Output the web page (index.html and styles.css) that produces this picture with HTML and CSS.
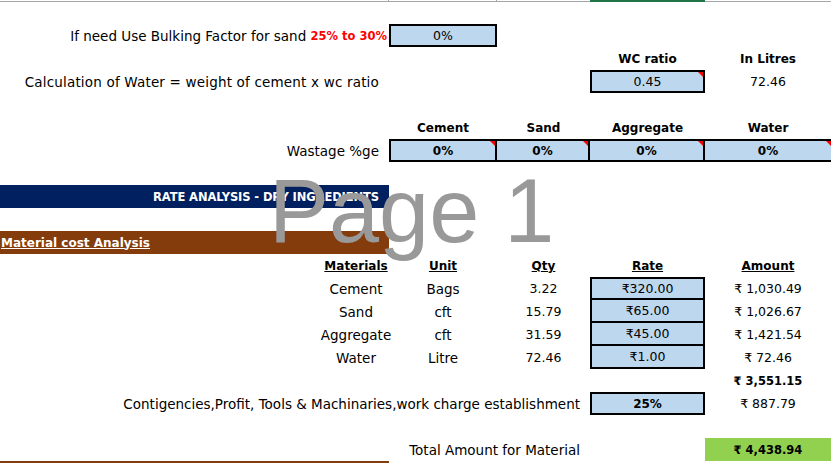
FILE: index.html
```html
<!DOCTYPE html>
<html lang="en">
<head>
<meta charset="utf-8">
<title>Rate Analysis</title>
<link rel="stylesheet" href="styles.css">
</head>
<body>
<div class="sheet">
  <div class="colbar"><span></span><span class="tick"></span><span class="tick"></span><span></span><span class="sel"></span><span></span></div>
  <div class="gap0"></div>

  <div class="row">
    <div class="cell a lbl tight">If need Use Bulking Factor for sand&nbsp;<span class="red">25% to 30%</span></div>
    <div class="cell c3 box n">0%</div>
  </div>
  <div class="row">
    <div class="cell c5 b">WC ratio</div>
    <div class="cell c6 b">In Litres</div>
  </div>
  <div class="row">
    <div class="cell a lbl loose">Calculation of Water = weight of cement x wc ratio</div>
    <div class="cell c5 box n tri">0.45</div>
    <div class="cell c6 n">72.46</div>
  </div>
  <div class="row"></div>
  <div class="row">
    <div class="cell c3 b">Cement</div>
    <div class="cell c4 b">Sand</div>
    <div class="cell c5 b">Aggregate</div>
    <div class="cell c6 b">Water</div>
  </div>
  <div class="row">
    <div class="cell a lbl">Wastage %ge</div>
    <div class="cell c3 box b tri">0%</div>
    <div class="cell c4 box nl b tri">0%</div>
    <div class="cell c5 box nl b tri">0%</div>
    <div class="cell c6 box nl b tri">0%</div>
  </div>
  <div class="row"></div>
  <div class="row">
    <div class="cell a lbl navy">RATE ANALYSIS - DRY INGREDIENTS</div>
  </div>
  <div class="row"></div>
  <div class="row">
    <div class="cell a brown title">Material cost Analysis</div>
  </div>
  <div class="row">
    <div class="cell m b u">Materials</div>
    <div class="cell c3 b u">Unit</div>
    <div class="cell c4 b u">Qty</div>
    <div class="cell c5 b u">Rate</div>
    <div class="cell c6 b u">Amount</div>
  </div>
  <div class="row">
    <div class="cell m">Cement</div>
    <div class="cell c3">Bags</div>
    <div class="cell c4 n">3.22</div>
    <div class="cell c5 box n">₹320.00</div>
    <div class="cell c6 n">₹ 1,030.49</div>
  </div>
  <div class="row">
    <div class="cell m">Sand</div>
    <div class="cell c3">cft</div>
    <div class="cell c4 n">15.79</div>
    <div class="cell c5 box nt n">₹65.00</div>
    <div class="cell c6 n">₹ 1,026.67</div>
  </div>
  <div class="row">
    <div class="cell m">Aggregate</div>
    <div class="cell c3">cft</div>
    <div class="cell c4 n">31.59</div>
    <div class="cell c5 box nt n">₹45.00</div>
    <div class="cell c6 n">₹ 1,421.54</div>
  </div>
  <div class="row">
    <div class="cell m">Water</div>
    <div class="cell c3">Litre</div>
    <div class="cell c4 n">72.46</div>
    <div class="cell c5 box nt n">₹1.00</div>
    <div class="cell c6 n">₹ 72.46</div>
  </div>
  <div class="row">
    <div class="cell c6 bn">₹ 3,551.15</div>
  </div>
  <div class="row">
    <div class="cell wide lbl">Contigencies,Profit, Tools &amp; Machinaries,work charge establishment</div>
    <div class="cell c5 box b">25%</div>
    <div class="cell c6 n">₹ 887.79</div>
  </div>
  <div class="row"></div>
  <div class="row">
    <div class="cell wide lbl">Total Amount for Material</div>
    <div class="cell c6 green bn">₹ 4,438.94</div>
  </div>
  <div class="row">
    <div class="cell a brown"></div>
  </div>

  <div class="watermark">Page 1</div>
</div>
</body>
</html>
```
FILE: styles.css
```css
html, body {
  margin: 0;
  padding: 0;
  overflow: hidden;
  background: #fff;
}

body {
  font-family: "DejaVu Sans", "Liberation Sans", sans-serif;
  font-size: 13.5px;
  color: #000;
}

.sheet {
  position: relative;
  width: 831px;
  height: 463px;
  overflow: hidden;
}

.colbar {
  display: grid;
  grid-template-columns: 323px 66px 108px 93px 115px 126px;
  height: 2px;
}

.colbar span {
  box-sizing: border-box;
  height: 2px;
  border-bottom: 1px solid #a6a6a6;
}

.colbar .tick {
  border-right: 1px solid #a6a6a6;
}

.colbar .sel {
  background: #217346;
  border-bottom: none;
}

.gap0 {
  height: 22px;
}

.row {
  display: grid;
  grid-template-columns: 323px 66px 108px 93px 115px 126px;
  grid-template-rows: 23px;
  height: 23px;
}

.cell {
  position: relative;
  box-sizing: border-box;
  display: flex;
  align-items: center;
  justify-content: center;
  white-space: nowrap;
  min-width: 0;
}

.a { grid-column: 1 / 3; }
.wide { grid-column: 1 / 5; }
.m { grid-column: 2; }
.c3 { grid-column: 3; }
.c4 { grid-column: 4; }
.c5 { grid-column: 5; }
.c6 { grid-column: 6; }

.lbl {
  justify-content: flex-end;
  padding-right: 10px;
}

.lbl.tight {
  padding-right: 2px;
}

.lbl.loose {
  letter-spacing: 0.18px;
}

.n {
  font-size: 12.5px;
}

.b {
  font-weight: bold;
  font-size: 12px;
}

.bn {
  font-weight: bold;
  font-size: 11.5px;
}

.u {
  text-decoration: underline;
}

.red {
  color: #ff0000;
  font-weight: bold;
  font-size: 11.5px;
}

.box {
  background: #bdd7ee;
  border: 2px solid #000;
}

.box.nt { border-top: none; }
.box.nl { border-left: none; }

.c6.box { border-right: none; }

.tri::after {
  content: "";
  position: absolute;
  top: 0;
  right: 0;
  border-top: 5px solid #ff0000;
  border-left: 5px solid transparent;
}

.navy {
  background: #002060;
  color: #fff;
  font-weight: bold;
  font-size: 11.5px;
  letter-spacing: -0.1px;
}

.brown {
  background: #843c0c;
}

.title {
  justify-content: flex-start;
  padding-left: 1px;
  color: #fff;
  font-weight: bold;
  font-size: 12px;
  text-decoration: underline;
}

.green {
  background: #92d050;
}

.watermark {
  position: absolute;
  left: 269px;
  top: 166px;
  font-family: "Liberation Sans", Arial, sans-serif;
  font-size: 90px;
  line-height: 90px;
  color: #999;
  white-space: nowrap;
  pointer-events: none;
}
```
